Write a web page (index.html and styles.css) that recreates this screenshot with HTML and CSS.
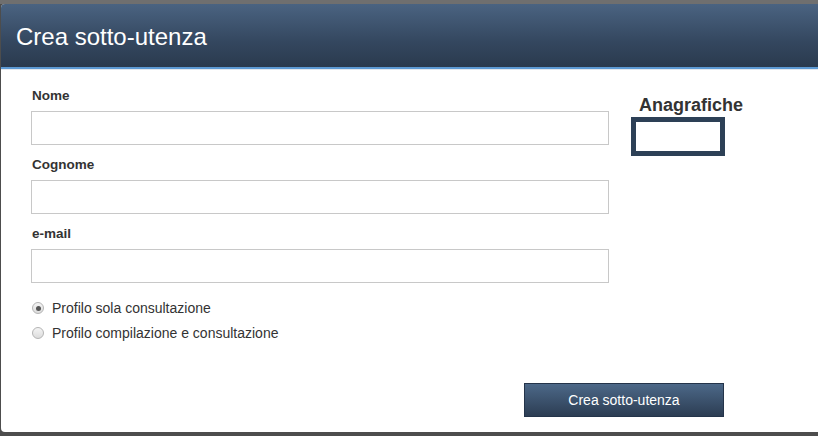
FILE: index.html
```html
<!DOCTYPE html>
<html lang="it">
<head>
<meta charset="utf-8">
<title>Crea sotto-utenza</title>
<link rel="stylesheet" href="styles.css">
</head>
<body>
<div class="modal">
  <div class="modal-header">
    <h1 class="modal-title">Crea sotto-utenza</h1>
  </div>
  <div class="modal-body">
    <div class="form-col">
      <div class="field">
        <label class="field-label">Nome</label>
        <div class="text-input"></div>
      </div>
      <div class="field">
        <label class="field-label">Cognome</label>
        <div class="text-input"></div>
      </div>
      <div class="field">
        <label class="field-label">e-mail</label>
        <div class="text-input"></div>
      </div>
      <div class="radios">
        <div class="radio-row"><span class="radio checked"></span><span class="radio-text">Profilo sola consultazione</span></div>
        <div class="radio-row"><span class="radio"></span><span class="radio-text">Profilo compilazione e consultazione</span></div>
      </div>
    </div>
    <div class="side-col">
      <div class="side-title">Anagrafiche</div>
      <div class="side-box"></div>
    </div>
  </div>
  <div class="modal-footer">
    <button class="btn-primary">Crea sotto-utenza</button>
  </div>
</div>
</body>
</html>
```

FILE: styles.css
```css
html, body {
  margin: 0;
  padding: 0;
}
body {
  width: 818px;
  height: 436px;
  overflow: hidden;
  background: linear-gradient(#6f6f6f 0, #6f6f6f 4px, #4d4d4d 4px);
  font-family: "Liberation Sans", Arial, sans-serif;
}
.modal {
  margin: 4px 0 0 1px;
  width: 817px;
  height: 428px;
  background: #fff;
  border-radius: 4px 0 0 4px;
  overflow: hidden;
  display: flex;
  flex-direction: column;
}
.modal-header {
  height: 63px;
  background: linear-gradient(#4a6381, #34475f 60%, #2a3a4e);
  border-bottom: 2px solid #5d9ad4;
  box-shadow: 0 1px 0 #e2e8ee;
  display: flex;
  align-items: center;
  padding-left: 15px;
}
.modal-title {
  margin: 0;
  font-size: 24px;
  font-weight: normal;
  color: #fff;
  line-height: 28px;
  position: relative;
  top: 1px;
}
.modal-body {
  display: grid;
  grid-template-columns: 578px 94px;
  column-gap: 22px;
  padding: 19px 0 0 30px;
}
.field {
  display: flex;
  flex-direction: column;
  margin-bottom: 12px;
}
.field-label {
  font-size: 13.5px;
  font-weight: bold;
  color: #333;
  line-height: 16px;
  margin-bottom: 7px;
  padding-left: 1px;
}
.text-input {
  height: 32px;
  border: 1px solid #c8c8c8;
  background: #fff;
}
.radios {
  padding-top: 5px;
  display: flex;
  flex-direction: column;
  gap: 9px;
}
.radio-row {
  display: flex;
  align-items: center;
  height: 16px;
}
.radio {
  width: 10px;
  height: 10px;
  border: 1px solid #b4b4b4;
  border-radius: 50%;
  background: linear-gradient(#f4f4f4, #dcdcdc);
  margin-left: 1px;
  margin-right: 8px;
  display: flex;
  align-items: center;
  justify-content: center;
}
.radio.checked::after {
  content: "";
  width: 5px;
  height: 5px;
  border-radius: 50%;
  background: #555;
}
.radio-text {
  font-size: 14px;
  color: #333;
}
.side-col {
  padding-top: 7px;
}
.side-title {
  font-size: 18px;
  font-weight: bold;
  color: #333;
  line-height: 20px;
  padding-left: 8px;
  margin-bottom: 2px;
}
.side-box {
  width: 84px;
  height: 29px;
  border: 5px solid #2d4056;
}
.modal-footer {
  margin-top: auto;
  padding: 0 0 15px 523px;
}
.btn-primary {
  display: block;
  width: 200px;
  height: 34px;
  border: 1px solid #24344a;
  background: linear-gradient(#4c6888, #2c3d53);
  color: #fff;
  font-family: "Liberation Sans", Arial, sans-serif;
  font-size: 14px;
  padding: 0;
}
```
